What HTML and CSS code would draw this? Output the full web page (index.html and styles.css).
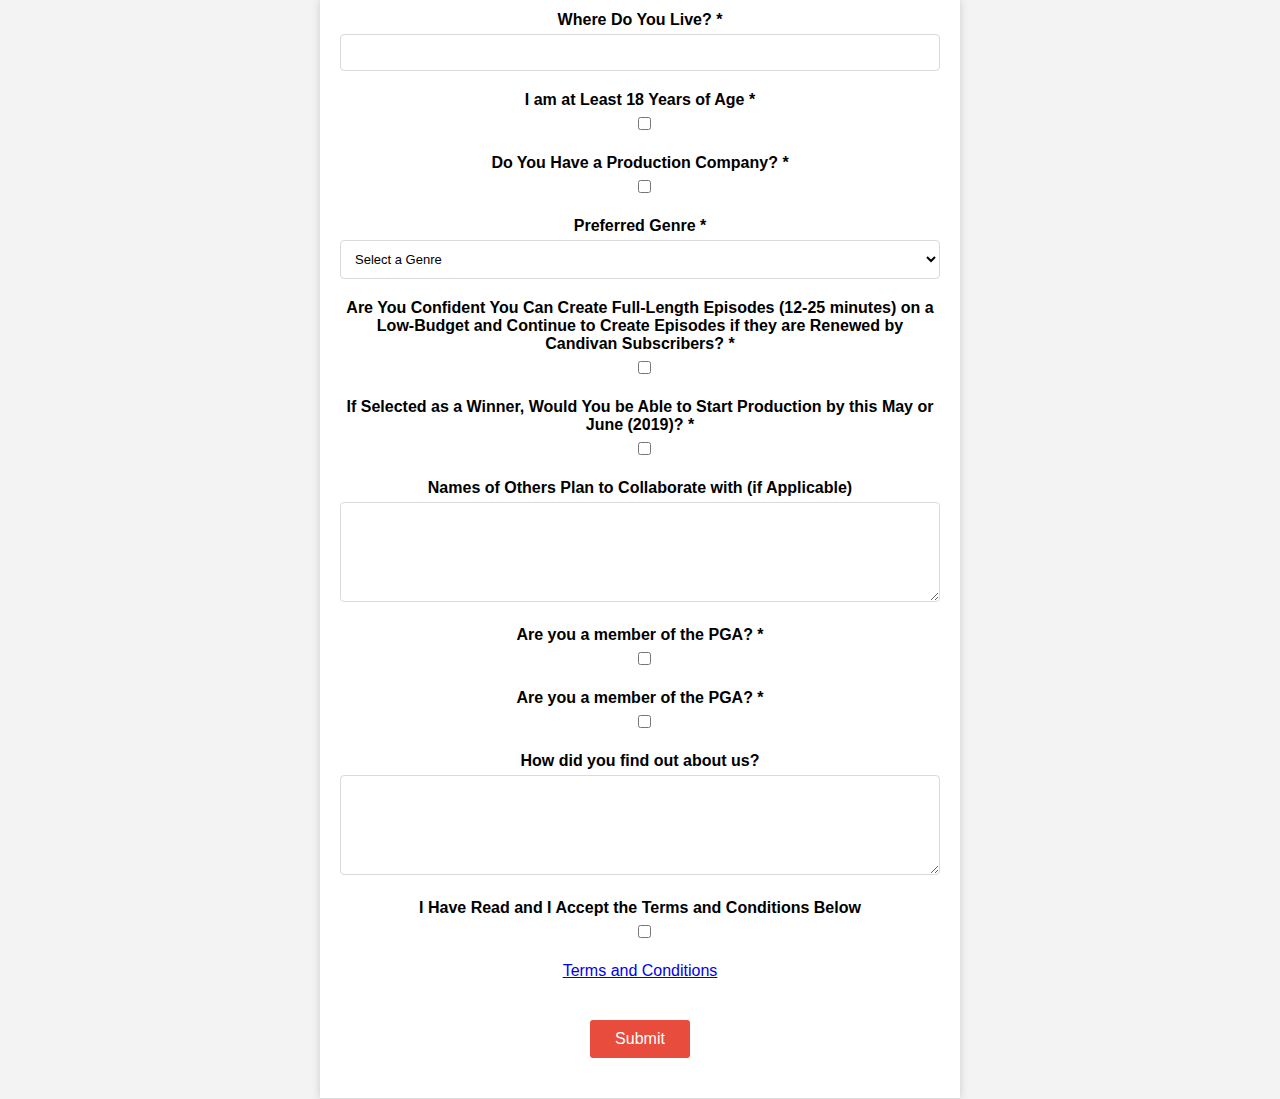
FILE: index.html
```html
<!DOCTYPE html>
<html lang="en">
<head>
<meta charset="utf-8">
<title>Application Form</title>
<link rel="stylesheet" href="styles.css">
</head>
<body>
<main class="card">
  <form class="form">
    <div class="group group-field">
      <label class="label" for="live">Where Do You Live? *</label>
      <input class="field" id="live" type="text">
    </div>
    <div class="group">
      <label class="label" for="age">I am at Least 18 Years of Age *</label>
      <div class="check-row"><input class="check" id="age" type="checkbox"></div>
    </div>
    <div class="group">
      <label class="label" for="company">Do You Have a Production Company? *</label>
      <div class="check-row"><input class="check" id="company" type="checkbox"></div>
    </div>
    <div class="group group-field">
      <label class="label" for="genre">Preferred Genre *</label>
      <select class="select" id="genre">
        <option>Select a Genre</option>
      </select>
    </div>
    <div class="group">
      <label class="label" for="confident">Are You Confident You Can Create Full-Length Episodes (12-25 minutes) on a Low-Budget and Continue to Create Episodes if they are Renewed by Candivan Subscribers? *</label>
      <div class="check-row"><input class="check" id="confident" type="checkbox"></div>
    </div>
    <div class="group">
      <label class="label" for="winner">If Selected as a Winner, Would You be Able to Start Production by this May or June (2019)? *</label>
      <div class="check-row"><input class="check" id="winner" type="checkbox"></div>
    </div>
    <div class="group">
      <label class="label" for="names">Names of Others Plan to Collaborate with (if Applicable)</label>
      <textarea class="area" id="names"></textarea>
    </div>
    <div class="group">
      <label class="label" for="pga1">Are you a member of the PGA? *</label>
      <div class="check-row"><input class="check" id="pga1" type="checkbox"></div>
    </div>
    <div class="group">
      <label class="label" for="pga2">Are you a member of the PGA? *</label>
      <div class="check-row"><input class="check" id="pga2" type="checkbox"></div>
    </div>
    <div class="group">
      <label class="label" for="find">How did you find out about us?</label>
      <textarea class="area" id="find"></textarea>
    </div>
    <div class="group">
      <label class="label" for="terms">I Have Read and I Accept the Terms and Conditions Below</label>
      <div class="check-row"><input class="check" id="terms" type="checkbox"></div>
    </div>
    <div class="group link-row">
      <a class="terms-link" href="#">Terms and Conditions</a>
    </div>
    <div class="actions">
      <button class="submit" type="button">Submit</button>
    </div>
  </form>
</main>
</body>
</html>
```

FILE: styles.css
```css
html, body {
  margin: 0;
  padding: 0;
}

body {
  background: #f3f3f3;
  font-family: "Liberation Sans", Arial, Helvetica, sans-serif;
  color: #000;
  height: 1099px;
  overflow: hidden;
}

.card {
  width: 600px;
  margin: 0 auto;
  background: #fff;
  padding: 11px 20px 40px;
  border-bottom: 1px solid #dcdcdc;
  box-shadow: 0 0 8px rgba(0, 0, 0, 0.16);
}

.form {
  display: flex;
  flex-direction: column;
}

.group {
  margin-bottom: 19px;
  text-align: center;
}

.group-field {
  margin-bottom: 20px;
}

.label {
  display: block;
  font-size: 16px;
  font-weight: bold;
  line-height: 18px;
  margin-bottom: 5px;
  text-align: center;
}

.field {
  display: block;
  box-sizing: border-box;
  width: 600px;
  height: 37px;
  border: 1px solid #dadada;
  border-radius: 4px;
  padding: 8px 12px;
  font-family: inherit;
  font-size: 14px;
  background: #fff;
  margin: 0;
}

.select {
  display: block;
  box-sizing: border-box;
  width: 600px;
  height: 39px;
  border: 1px solid #dadada;
  border-radius: 4px;
  padding: 0 10px;
  font-family: inherit;
  font-size: 13px;
  color: #000;
  background: #fff;
  margin: 0;
}

.area {
  display: block;
  box-sizing: border-box;
  width: 600px;
  height: 100px;
  border: 1px solid #dadada;
  border-radius: 4px;
  padding: 8px 12px;
  font-family: inherit;
  font-size: 14px;
  background: #fff;
  margin: 0 0 5px;
}

.check-row {
  display: flex;
  justify-content: center;
  padding: 3px 0 5px 8px;
}

.check {
  display: block;
  width: 13px;
  height: 13px;
  margin: 0;
}

.link-row {
  line-height: 18px;
  margin-bottom: 40px;
}

.terms-link {
  font-size: 16px;
  color: #0000ee;
  text-decoration: underline;
}

.actions {
  display: flex;
  justify-content: center;
}

.submit {
  width: 100px;
  height: 38px;
  background: #e74c3c;
  color: #fff;
  border: none;
  border-radius: 3px;
  font-family: inherit;
  font-size: 16px;
  cursor: pointer;
}
```
